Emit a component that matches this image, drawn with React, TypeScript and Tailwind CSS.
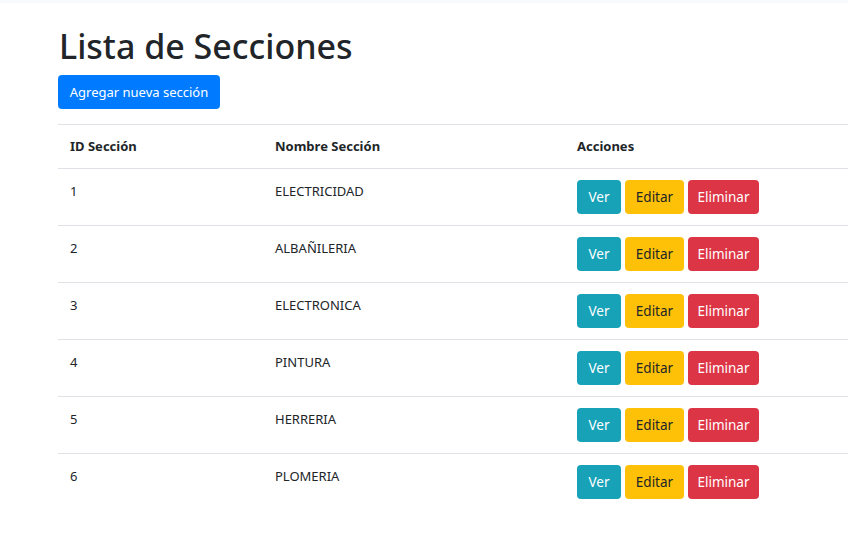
import React from "react";

const rows = [
  { id: 1, name: "ELECTRICIDAD" },
  { id: 2, name: "ALBAÑILERIA" },
  { id: 3, name: "ELECTRONICA" },
  { id: 4, name: "PINTURA" },
  { id: 5, name: "HERRERIA" },
  { id: 6, name: "PLOMERIA" },
];

export default function App() {
  return (
    <div
      className="w-[862px] h-[547px] bg-white text-[#212529] overflow-hidden"
      style={{ fontFamily: '"Noto Sans", "Open Sans", sans-serif' }}
    >
      <div className="w-[848px] h-[3px] bg-[#f8f9fa]" />
      <div className="w-[848px] pl-[58px] pt-[22px]">
        <h1 className="text-[34px] font-medium leading-[43px] mb-[7px] ml-[1px]">Lista de Secciones</h1>
        <button className="h-[34px] w-[162px] rounded-[4px] bg-[#007bff] text-white text-[13px] leading-[21px]">
          Agregar nueva sección
        </button>
        <table className="mt-[15px] w-[790px] border-collapse text-[13px]">
          <thead>
            <tr className="border-t border-b border-[#dee2e6] h-[44px]">
              <th className="w-[205px] pl-[12px] text-left font-bold align-middle">ID Sección</th>
              <th className="w-[302px] pl-[12px] text-left font-bold align-middle">Nombre Sección</th>
              <th className="pl-[12px] text-left font-bold align-middle">Acciones</th>
            </tr>
          </thead>
          <tbody>
            {rows.map((r, i) => (
              <tr key={r.id} className={i > 0 ? "border-t border-[#dee2e6]" : ""}>
                <td className="pl-[12px] pt-[12px] pb-[10px] align-top leading-[20px]">{r.id}</td>
                <td className="pl-[12px] pt-[12px] pb-[10px] align-top leading-[20px]">{r.name}</td>
                <td className="pl-[12px] pt-[11px] pb-[11px] align-top">
                  <div className="flex gap-[4px] text-[13.5px]">
                    <button className="h-[34px] w-[44px] rounded-[4px] bg-[#17a2b8] text-white">Ver</button>
                    <button className="h-[34px] w-[59px] rounded-[4px] bg-[#ffc107] text-[#212529]">Editar</button>
                    <button className="h-[34px] w-[71px] rounded-[4px] bg-[#dc3545] text-white">Eliminar</button>
                  </div>
                </td>
              </tr>
            ))}
          </tbody>
        </table>
      </div>
    </div>
  );
}
